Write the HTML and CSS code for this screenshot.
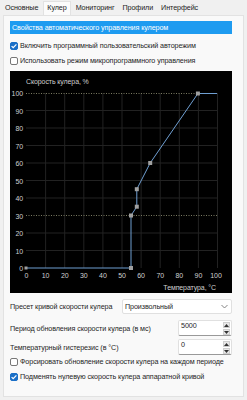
FILE: index.html
```html
<!DOCTYPE html>
<html lang="ru">
<head>
<meta charset="utf-8">
<link rel="stylesheet" href="styles.css">
</head>
<body>
<div class="tabs">
  <span class="tab">Основные</span>
  <span class="tab active">Кулер</span>
  <span class="tab">Мониторинг</span>
  <span class="tab">Профили</span>
  <span class="tab">Интерфейс</span>
</div>
<div class="panel">
  <div class="header">Свойства автоматического управления кулером</div>
  <label class="check-row first"><span class="box checked"><svg viewBox="0 0 8 8" width="8" height="8"><path d="M1.6 4.1 L3.2 5.7 L6.4 2.3" fill="none" stroke="#fff" stroke-width="1.2"/></svg></span>Включить программный пользовательский авторежим</label>
  <label class="check-row"><span class="box"></span>Использовать режим микропрограммного управления</label>
  <div class="chart">
    <svg width="222" height="222" viewBox="0 0 222 222">
      <rect width="222" height="222" fill="#000"/>
      <g stroke="#222" stroke-width="1">
        <line x1="35.6" y1="22" x2="35.6" y2="197"/>
        <line x1="54.7" y1="22" x2="54.7" y2="197"/>
        <line x1="73.8" y1="22" x2="73.8" y2="197"/>
        <line x1="92.9" y1="22" x2="92.9" y2="197"/>
        <line x1="112" y1="22" x2="112" y2="197"/>
        <line x1="131.1" y1="22" x2="131.1" y2="197"/>
        <line x1="150.2" y1="22" x2="150.2" y2="197"/>
        <line x1="169.3" y1="22" x2="169.3" y2="197"/>
        <line x1="188.4" y1="22" x2="188.4" y2="197"/>
        <line x1="207.5" y1="22" x2="207.5" y2="197"/>
        <line x1="16" y1="39.5" x2="207" y2="39.5"/>
        <line x1="16" y1="57" x2="207" y2="57"/>
        <line x1="16" y1="74.5" x2="207" y2="74.5"/>
        <line x1="16" y1="92" x2="207" y2="92"/>
        <line x1="16" y1="109.5" x2="207" y2="109.5"/>
        <line x1="16" y1="127" x2="207" y2="127"/>
        <line x1="16" y1="162" x2="207" y2="162"/>
        <line x1="16" y1="179.5" x2="207" y2="179.5"/>
      </g>
      <g stroke="#7a7a62" stroke-width="1" stroke-dasharray="1 1.5">
        <line x1="16" y1="22.5" x2="188" y2="22.5"/>
        <line x1="16" y1="144.5" x2="207" y2="144.5"/>
      </g>
      <polyline points="16,197 121,197 121,144.5 126.8,135.7 126.8,118.2 140.2,92 187.9,22.5 207,22.5" fill="none" stroke="#6f9fd2" stroke-width="1"/>
      <g fill="#a0a0a0">
        <rect x="14.5" y="195.5" width="3" height="3"/>
        <rect x="119" y="195" width="4" height="4"/>
        <rect x="119" y="142.5" width="4" height="4"/>
        <rect x="124.8" y="133.7" width="4" height="4"/>
        <rect x="124.8" y="116.2" width="4" height="4"/>
        <rect x="138.2" y="90" width="4" height="4"/>
        <rect x="185.9" y="20.5" width="4" height="4"/>
      </g>
      <g class="lbl" fill="#d0d0d0">
        <text x="16" y="13">Скорость кулера, %</text>
        <g text-anchor="end">
          <text x="13" y="25">100</text>
          <text x="13" y="42.5">90</text>
          <text x="13" y="60">80</text>
          <text x="13" y="77.5">70</text>
          <text x="13" y="95">60</text>
          <text x="13" y="112.5">50</text>
          <text x="13" y="130">40</text>
          <text x="13" y="147.5">30</text>
          <text x="13" y="165">20</text>
          <text x="13" y="182.5">10</text>
          <text x="13" y="200">0</text>
        </g>
        <g text-anchor="middle">
          <text x="16.5" y="207">0</text>
          <text x="35.6" y="207">10</text>
          <text x="54.7" y="207">20</text>
          <text x="73.8" y="207">30</text>
          <text x="92.9" y="207">40</text>
          <text x="112" y="207">50</text>
          <text x="131.1" y="207">60</text>
          <text x="150.2" y="207">70</text>
          <text x="169.3" y="207">80</text>
          <text x="188.4" y="207">90</text>
          <text x="206" y="207">100</text>
        </g>
        <text x="206" y="219" text-anchor="end">Температура, °С</text>
      </g>
    </svg>
  </div>
  <div class="form-row preset">
    <span class="label">Пресет кривой скорости кулера</span>
    <div class="select"><span>Произвольный</span><svg width="7" height="5" viewBox="0 0 7 5"><path d="M0.5 1 L3.5 4 L6.5 1" fill="none" stroke="#777" stroke-width="0.9"/></svg></div>
  </div>
  <div class="form-row spin-row period">
    <span class="label">Период обновления скорости кулера (в мс)</span>
    <div class="spin"><span class="val">5000</span><span class="btns"><span class="btn"><svg width="5" height="3" viewBox="0 0 5 3"><path d="M0 3 L2.5 0 L5 3Z" fill="#333"/></svg></span><span class="btn"><svg width="5" height="3" viewBox="0 0 5 3"><path d="M0 0 L2.5 3 L5 0Z" fill="#333"/></svg></span></span></div>
  </div>
  <div class="form-row spin-row hyst">
    <span class="label">Температурный гистерезис (в °С)</span>
    <div class="spin"><span class="val">0</span><span class="btns"><span class="btn"><svg width="5" height="3" viewBox="0 0 5 3"><path d="M0 3 L2.5 0 L5 3Z" fill="#333"/></svg></span><span class="btn"><svg width="5" height="3" viewBox="0 0 5 3"><path d="M0 0 L2.5 3 L5 0Z" fill="#333"/></svg></span></span></div>
  </div>
  <label class="check-row force"><span class="box"></span>Форсировать обновление скорости кулера на каждом периоде</label>
  <label class="check-row"><span class="box checked"><svg viewBox="0 0 8 8" width="8" height="8"><path d="M1.6 4.1 L3.2 5.7 L6.4 2.3" fill="none" stroke="#fff" stroke-width="1.2"/></svg></span>Подменять нулевую скорость кулера аппаратной кривой</label>
</div>
</body>
</html>
```
FILE: styles.css
```css
* { box-sizing: border-box; }
html, body { margin: 0; padding: 0; }
body {
  width: 247px;
  height: 400px;
  background: #f0f0f0;
  font-family: "Liberation Sans", Arial, sans-serif;
  font-size: 7.2px;
  letter-spacing: -0.1px;
  color: #1f1f1f;
  overflow: hidden;
  white-space: nowrap;
}
.tabs {
  display: flex;
  height: 15px;
  align-items: flex-end;
  padding-left: 2px;
}
.tab {
  height: 13px;
  line-height: 11px;
  padding: 0 3px;
  margin-right: 2px;
  color: #222;
}
.tab.active {
  background: #fbfbfb;
  border: 1px solid #e2e2e2;
  border-bottom: none;
  height: 14px;
  padding: 0 3px;
}
.panel {
  margin: 0 3px;
  height: 382px;
  background: #f9f9f9;
  border: 1px solid #e2e2e2;
  padding: 5px 11px 0 6px;
  display: flex;
  flex-direction: column;
}
.header {
  height: 13px;
  line-height: 13px;
  background: #1e9bf0;
  color: #fff;
  padding-left: 2px;
}
.check-row {
  display: flex;
  align-items: center;
  height: 15px;
  gap: 2px;
}
.check-row.first { margin-top: 4px; }
.box {
  width: 8px;
  height: 8px;
  border: 1px solid #777;
  border-radius: 2px;
  background: #fff;
  display: flex;
  flex: none;
}
.box.checked {
  background: #1a6fc7;
  border-color: #1a6fc7;
}
.box svg { margin: -1px; }
.chart {
  margin-top: 3px;
  height: 222px;
  width: 222px;
}
.chart svg { display: block; }
.lbl text {
  font-family: "Liberation Sans", Arial, sans-serif;
  font-size: 7px;
}
.form-row {
  display: flex;
  align-items: center;
  justify-content: space-between;
}
.preset { margin-top: 6px; height: 15px; }
.select {
  width: 110px;
  height: 15px;
  background: #fff;
  border: 1px solid #e0e0e0;
  border-radius: 2px;
  display: flex;
  align-items: center;
  justify-content: space-between;
  padding: 0 3px 0 2px;
}
.spin-row { height: 16px; }
.period { margin-top: 6px; }
.hyst { margin-top: 3px; }
.spin {
  width: 54px;
  height: 16px;
  background: #fff;
  border: 1px solid #e0e0e0;
  border-bottom-color: #999;
  border-radius: 2px;
  display: flex;
  justify-content: space-between;
  padding: 0 1px 0 2px;
}
.val { line-height: 9px; }
.btns {
  display: flex;
  flex-direction: column;
  gap: 1px;
  padding-top: 1px;
}
.btn {
  width: 7px;
  height: 6px;
  background: #e8e8e8;
  border: 1px solid #cfcfcf;
  display: flex;
  align-items: center;
  justify-content: center;
}
.force { margin-top: -1px; }
```
